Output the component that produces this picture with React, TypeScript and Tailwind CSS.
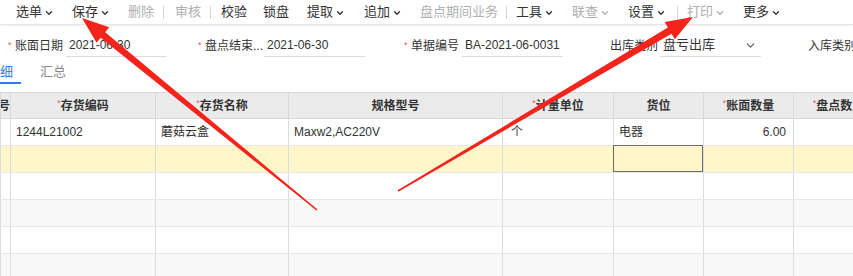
import { ChevronDown } from "lucide-react";

type ToolItem = { label: string; w: string; off?: boolean; menu?: boolean; sep?: string };

const tools: ToolItem[] = [
  { label: "选单", w: "w-[56px]", menu: true },
  { label: "保存", w: "w-[56px]", menu: true },
  { label: "删除", w: "w-[35px]", off: true, sep: "mr-[11px]" },
  { label: "审核", w: "w-[35px]", off: true, sep: "mr-[10px]" },
  { label: "校验", w: "w-[42px]" },
  { label: "锁盘", w: "w-[44px]" },
  { label: "提取", w: "w-[57px]", menu: true },
  { label: "追加", w: "w-[56px]", menu: true },
  { label: "盘点期间业务", w: "w-[86px]", off: true, sep: "mr-[9px]" },
  { label: "工具", w: "w-[56px]", menu: true },
  { label: "联查", w: "w-[56px]", off: true, menu: true },
  { label: "设置", w: "w-[49px]", menu: true, sep: "mr-[9px]" },
  { label: "打印", w: "w-[56px]", off: true, menu: true },
  { label: "更多", w: "w-[56px]", menu: true },
];

const fields = [
  { label: "账面日期", value: "2021-06-30", req: true, box: "w-[190px]", lw: "w-[51px]" },
  { label: "盘点结束...", value: "2021-06-30", req: true, box: "w-[206px]", lw: "w-[59px]" },
  { label: "单据编号", value: "BA-2021-06-0031", req: true, box: "w-[199px]", lw: "w-[51px]" },
  { label: "出库类别", value: "盘亏出库", select: true, box: "w-[198px]", lw: "w-[50px]" },
  { label: "入库类别", value: "", box: "w-[60px]", lw: "w-[53px]", bare: true },
];

const cols = [
  { title: "序号", w: "w-[10px]" },
  { title: "存货编码", w: "w-[145px]", req: true },
  { title: "存货名称", w: "w-[133px]", req: true },
  { title: "规格型号", w: "w-[214px]" },
  { title: "计量单位", w: "w-[111px]", req: true },
  { title: "货位", w: "w-[90px]" },
  { title: "账面数量", w: "w-[90px]", req: true },
  { title: "盘点数量", w: "w-[90px]", req: true },
];

const empty = ["", "", "", "", "", "", "", ""];

const rows = [
  { bg: "bg-white", cells: ["", "1244L21002", "蘑菇云盒", "Maxw2,AC220V", "个", "电器", "6.00", ""] },
  { bg: "bg-[#fff6c9]", cells: empty, active: true },
  { bg: "bg-white", cells: empty },
  { bg: "bg-[#f8f8f8]", cells: empty },
  { bg: "bg-white", cells: empty },
  { bg: "bg-[#f8f8f8]", cells: empty },
];

// tapered annotation arrow, tail thin, head wide
function arrowPoints(tx: number, ty: number, px: number, py: number) {
  const dx = px - tx;
  const dy = py - ty;
  const len = Math.hypot(dx, dy);
  const ux = dx / len;
  const uy = dy / len;
  const nx = -uy;
  const ny = ux;
  const L = 27;
  const bx = px - ux * L;
  const by = py - uy * L;
  const pts: [number, number][] = [
    [tx + nx * 0.8, ty + ny * 0.8],
    [bx + nx * 3.6, by + ny * 3.6],
    [bx + nx * 10, by + ny * 10],
    [px, py],
    [bx - nx * 10, by - ny * 10],
    [bx - nx * 3.6, by - ny * 3.6],
    [tx - nx * 0.8, ty - ny * 0.8],
  ];
  return pts.map((p) => p.join(",")).join(" ");
}

export default function App() {
  return (
    <div className="relative h-[276px] w-[853px] overflow-hidden bg-white font-['Liberation_Sans','Noto_Sans_CJK_SC',sans-serif] text-[#333]">
      {/* Toolbar */}
      <div className="flex h-[25px] items-center border-b border-[#e6e6e6] pl-[16px] text-[13px] shadow-[0_1px_2px_rgba(0,0,0,0.06)]">
        {tools.map((t) => (
          <div key={t.label} className="flex items-center">
            <div className={`flex items-center ${t.w} ${t.off ? "text-[#b0b0b0]" : "text-[#333]"}`}>
              <span>{t.label}</span>
              {t.menu && <ChevronDown size={10} strokeWidth={3.2} className="ml-[2px] mt-[1px]" />}
            </div>
            {t.sep && <div className={`h-[13px] w-px bg-[#d4d4d4] ${t.sep}`} />}
          </div>
        ))}
      </div>

      {/* Header fields */}
      <div className="mt-[9px] flex h-[23px] items-center pl-[8px] text-[12px]">
        {fields.map((f) => (
          <div key={f.label} className={`flex h-full shrink-0 items-center ${f.box}`}>
            <span className="w-[7px] shrink-0 text-[9px] text-[#f0505a]">{f.req ? "*" : ""}</span>
            <span className={`${f.lw} shrink-0 whitespace-nowrap`}>{f.label}</span>
            {!f.bare && (
              <div className="flex h-full w-[101px] shrink-0 items-center justify-between whitespace-nowrap border-b border-[#dcdcdc] pl-[3px] pr-[4px]">
                <span className={f.select ? "text-[13px]" : ""}>{f.value}</span>
                {f.select && <ChevronDown size={13} strokeWidth={2} className="text-[#555]" />}
              </div>
            )}
          </div>
        ))}
      </div>

      {/* Tabs */}
      <div className="mt-[4px] flex h-[23px] items-center text-[13px]">
        <div className="flex h-full w-[21px] items-center justify-end overflow-hidden border-b-2 border-[#2d7ff0] pr-[8px] text-[#2d7ff0]">
          <span className="whitespace-nowrap">明细</span>
        </div>
        <span className="ml-[19px] pb-[2px] text-[#888]">汇总</span>
      </div>

      {/* Grid */}
      <table className="mt-[8px] w-[883px] min-w-[883px] table-fixed border-collapse text-[12px]">
        <colgroup>
          {cols.map((c) => (
            <col key={c.title} className={c.w} />
          ))}
        </colgroup>
        <thead>
          <tr className="h-[26px] bg-[#ebebeb]">
            {cols.map((c, i) => (
              <th key={c.title} className="border border-[#d9d9d9] p-0 font-bold">
                {i === 0 ? (
                  <div className="flex w-[9px] justify-end overflow-hidden whitespace-nowrap">{c.title}</div>
                ) : (
                  <div className="overflow-hidden whitespace-nowrap text-center">
                    {c.req && <span className="align-top text-[9px] font-normal text-[#f0505a]">*</span>}
                    {c.title}
                  </div>
                )}
              </th>
            ))}
          </tr>
        </thead>
        <tbody>
          {rows.map((r, ri) => (
            <tr key={ri} className={`h-[27px] ${r.bg}`}>
              {r.cells.map((v, ci) => (
                <td
                  key={ci}
                  className="relative border-x border-y border-x-[#dcdcdc] border-y-[#e6e6e6] p-0"
                >
                  {r.active && ci === 5 && (
                    <div className="absolute -left-px -top-px bottom-0 right-0 border border-[#6e6e68]" />
                  )}
                  <div
                    className={`overflow-hidden whitespace-nowrap px-[5px] ${
                      ci === 6 ? "pr-[7px] text-right" : ci === 4 ? "pl-[8px] text-[#444]" : ""
                    }`}
                  >
                    {v}
                  </div>
                </td>
              ))}
            </tr>
          ))}
        </tbody>
      </table>

      {/* annotation arrows */}
      <svg className="pointer-events-none absolute left-0 top-0" width={853} height={276}>
        <polygon points={arrowPoints(317, 210, 82, 18)} fill="#f4231c" />
        <polygon points={arrowPoints(398, 191, 693, 17)} fill="#f4231c" />
      </svg>
    </div>
  );
}
